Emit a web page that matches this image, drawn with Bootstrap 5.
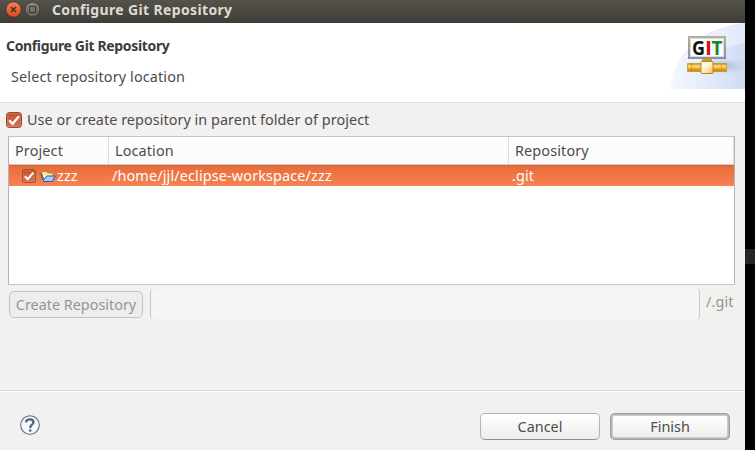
<!DOCTYPE html>
<html lang="en">
<head>
<meta charset="utf-8">
<meta name="viewport" content="width=device-width, initial-scale=1">
<title>Configure Git Repository</title>
<link href="https://cdn.jsdelivr.net/npm/bootstrap@5.3.0/dist/css/bootstrap.min.css" rel="stylesheet">
<style>
body{font-family:"Noto Sans","Open Sans",sans-serif;font-size:14.4px;line-height:20px;letter-spacing:.14px;color:#4c4c4c;background:#000;height:450px}
.desktop{width:755px;height:450px}
.dialog-win{width:745px;background:#f2f1f0}
.side{width:10px;background:#000;padding-top:249px}
.side div{height:15px;background:#252525}
.titlebar{height:23px;background:linear-gradient(#56534b,#3d3c38);color:#dfdbd2;padding-left:5px}
.titlebar svg{display:block;margin-top:-4px}
.titlebar b{font-size:14px;margin:-4px 0 0 11px;letter-spacing:.36px}
.banner{height:80px;background:#fff;border-bottom:1px solid #dcdad8}
.banner h1{font-size:14px;line-height:20px;font-weight:700;color:#3c3c3c;margin:13px 0 0 6px;letter-spacing:-.35px}
.banner p{margin:11px 0 0 11px}
.opt{height:33px;padding-left:6px;letter-spacing:.05px}
.opt svg{margin-right:5px}
.tree{margin:0 10px 0 8px;height:149px;background:#fff;border:1px solid #b8b3ae;border-top-color:#c8c4c0;border-bottom-color:#c8c4c0}
.cols{display:grid;grid-template-columns:100px 400px 1fr}
.heads{height:28px;background:linear-gradient(#fff,#f9f9f9);border-bottom:1px solid #cfcdcb}
.heads div{border-right:1px solid #deddda;padding:4px 0 0 6px}
.picked{height:21px;background:linear-gradient(#ea6b3a,#f68353);border-top:1px solid #d9602f;color:#fff}
.picked>div{padding-left:3px}
.picked .first{padding-left:13px}
.folder{margin:0 1px 0 4px}
.create{height:30px;margin:4px 10px 0 9px}
.btn{--bs-btn-font-size:14.4px;--bs-btn-line-height:20px;--bs-btn-padding-x:0;--bs-btn-padding-y:0;--bs-btn-border-radius:5px;--bs-btn-color:#4c4c4c;--bs-btn-disabled-color:#98948f;--bs-btn-disabled-opacity:1;--bs-btn-disabled-bg:#eeeded;--bs-btn-disabled-border-color:#c6c4c2}
.mk{width:134px;height:27px;margin-top:2px}
.path.form-control{width:550px;height:30px;min-height:0;padding:0;margin-left:7px;background:#f5f5f5;border:1px solid #c9c7c5;border-width:0 1px;border-radius:4px}
.suffix{color:#98948f;margin:3px 0 0 6px}
.foot{height:60px;margin-top:auto;border-top:1px solid #dad8d6;box-shadow:inset 0 1px #fff;padding:22px 15px 0 20px}
.help{margin-top:2px}
.acts{gap:10px}
.foot .btn{width:120px;height:27px;border:1px solid #b5b3b1;border-bottom-color:#92908e;background:linear-gradient(#fff,#eeedeb)}
.foot .def{border:2px solid #b8b8b8;box-shadow:inset 0 0 0 1px #c9c9c9;outline:1px solid #a0a0a0;outline-offset:-1px}
</style>
<script src="https://cdn.jsdelivr.net/npm/bootstrap@5.3.0/dist/js/bootstrap.bundle.min.js"></script>
</head>
<body class="m-0 overflow-hidden">
<svg width="0" height="0" class="position-absolute"><defs>
<linearGradient id="chk" x2="0" y2="1"><stop stop-color="#c2512a"/><stop offset="1" stop-color="#dd7350"/></linearGradient>
<linearGradient id="cls" x2="0" y2="1"><stop stop-color="#f58058"/><stop offset="1" stop-color="#e0481c"/></linearGradient>
<linearGradient id="mx" x2="0" y2="1"><stop stop-color="#8a877e"/><stop offset="1" stop-color="#62605a"/></linearGradient>
<linearGradient id="gold" x2="0" y2="1"><stop stop-color="#c98a10"/><stop offset=".35" stop-color="#ffe188"/><stop offset=".65" stop-color="#e9a820"/><stop offset="1" stop-color="#bd7d0c"/></linearGradient>
<linearGradient id="hub" x2="1" y2="1"><stop stop-color="#fff"/><stop offset=".5" stop-color="#fff4d0"/><stop offset="1" stop-color="#f3bb45"/></linearGradient>
<linearGradient id="sky" x2="1" y2="0"><stop stop-color="#f5f8fe"/><stop offset="1" stop-color="#d0dcf6"/></linearGradient>
<radialGradient id="sh"><stop stop-color="#b2b9cb"/><stop offset="1" stop-color="#c8d2e8" stop-opacity="0"/></radialGradient>
<linearGradient id="scr" x2="0" y2="1"><stop stop-color="#b5b09a"/><stop offset="1" stop-color="#8495a5"/></linearGradient>
<symbol id="box" viewBox="0 0 16 16"><rect x=".5" y=".5" width="15" height="15" rx="3" fill="url(#chk)" stroke="#8b4a32"/><rect x="1.5" y="1.5" width="13" height="13" rx="2" fill="none" stroke="#e58f70" stroke-opacity=".4"/><path d="M3.2 8.2 6.6 11.7 13 4.2" fill="none" stroke="#fff" stroke-width="2.3"/></symbol>
</defs></svg>
<div class="desktop d-flex">
<main class="dialog-win d-flex flex-column">
 <header class="titlebar d-flex align-items-center">
  <svg width="36" height="17" viewBox="0 0 36 17"><circle cx="8.5" cy="8.5" r="7.7" fill="url(#cls)" stroke="#3a2b22" stroke-width=".8"/><path d="m6 6 5 5m0-5-5 5" stroke="#3f2a20" stroke-width="1.4"/><circle cx="27.5" cy="8.5" r="7.4" fill="url(#mx)" stroke="#35342f" stroke-width=".8"/><path d="M24.5 5.5h6v6h-6z" fill="none" stroke="#3a3934" stroke-width="1.1"/></svg>
  <b>Configure Git Repository</b>
 </header>
 <section class="banner d-flex justify-content-between">
  <div><h1>Configure Git Repository</h1><p>Select repository location</p></div>
  <svg width="75" height="66" viewBox="0 0 75 66"><path d="M0 66C3 34 28 5 75 0V66z" fill="url(#sky)"/><path d="M17 32Q38 4 75 0V20Q45 25 30 40z" fill="#fff" opacity=".38"/><ellipse cx="54" cy="43" rx="30" ry="9" fill="url(#sh)"/>
  <path d="M19 14h36v21H19z" fill="#fff" stroke="url(#scr)" stroke-width="2"/><path d="M20.500 15.500h33v18h-33z" fill="none" stroke="#d5e0e6"/>
  <g font-family="Open Sans,sans-serif" font-weight="700" font-size="19.500" letter-spacing="0"><text x="22" y="31.500" fill="#111" textLength="13" lengthAdjust="spacingAndGlyphs">G</text><text x="35" y="31.500" fill="#d0101c" textLength="7" lengthAdjust="spacingAndGlyphs">I</text><text x="41.500" y="31.500" fill="#128c1c" textLength="11" lengthAdjust="spacingAndGlyphs">T</text></g>
  <path d="M32 36h10v4H32z" fill="#d99a18"/><path d="M17.500 40.500h39v8h-39z" fill="url(#gold)" stroke="#c18618" stroke-width=".6"/><path d="M21.500 40v9m30-9v9" stroke="#c98a18" stroke-opacity=".6"/><rect x="31" y="38.500" width="12" height="12" rx="1" fill="url(#hub)" stroke="#c08214"/></svg>
 </section>
 <label class="opt d-flex align-items-center"><svg width="16" height="16"><use href="#box"/></svg><span>Use or create repository in parent folder of project</span></label>
 <section class="tree">
  <div class="cols heads"><div>Project</div><div>Location</div><div>Repository</div></div>
  <div class="cols picked"><div class="first d-flex align-items-center"><svg width="14" height="14"><use href="#box"/></svg>
   <svg width="16" height="14" viewBox="0 0 16 14" class="folder"><path d="M2 11V3.500l1-1h3.500l1 1.500H13V8" fill="#ffe9a6" stroke="#b58a35"/><path d="m1 4.500 2.500 8h8.700l3-5.500H6.800L4 10.500z" fill="#a9cdf5" stroke="#2e57ad"/></svg><span>zzz</span></div><div>/home/jjl/eclipse-workspace/zzz</div><div>.git</div></div>
 </section>
 <div class="create d-flex"><button class="btn mk" disabled>Create Repository</button><input class="form-control path" disabled aria-label="Parent folder"><span class="suffix">/.git</span></div>
 <footer class="foot d-flex">
  <svg class="help" width="20" height="20" viewBox="0 0 20 20"><circle cx="10" cy="10" r="9.300" fill="#f8f8fa" stroke="#526b94" stroke-width="1.100"/><path d="M6.300 7.500V5.800Q7.300 4.300 10 4.300 13.500 4.300 13.500 7.200 13.300 9 11.400 10.200 10.300 11 10.300 13" fill="none" stroke="#485f87" stroke-width="2.200"/><circle cx="10.200" cy="15.600" r="1.300" fill="#485f87"/></svg>
  <div class="acts d-flex ms-auto"><button class="btn">Cancel</button><button class="btn def">Finish</button></div>
 </footer>
</main>
<aside class="side"><div></div></aside>
</div>
</body>
</html>
